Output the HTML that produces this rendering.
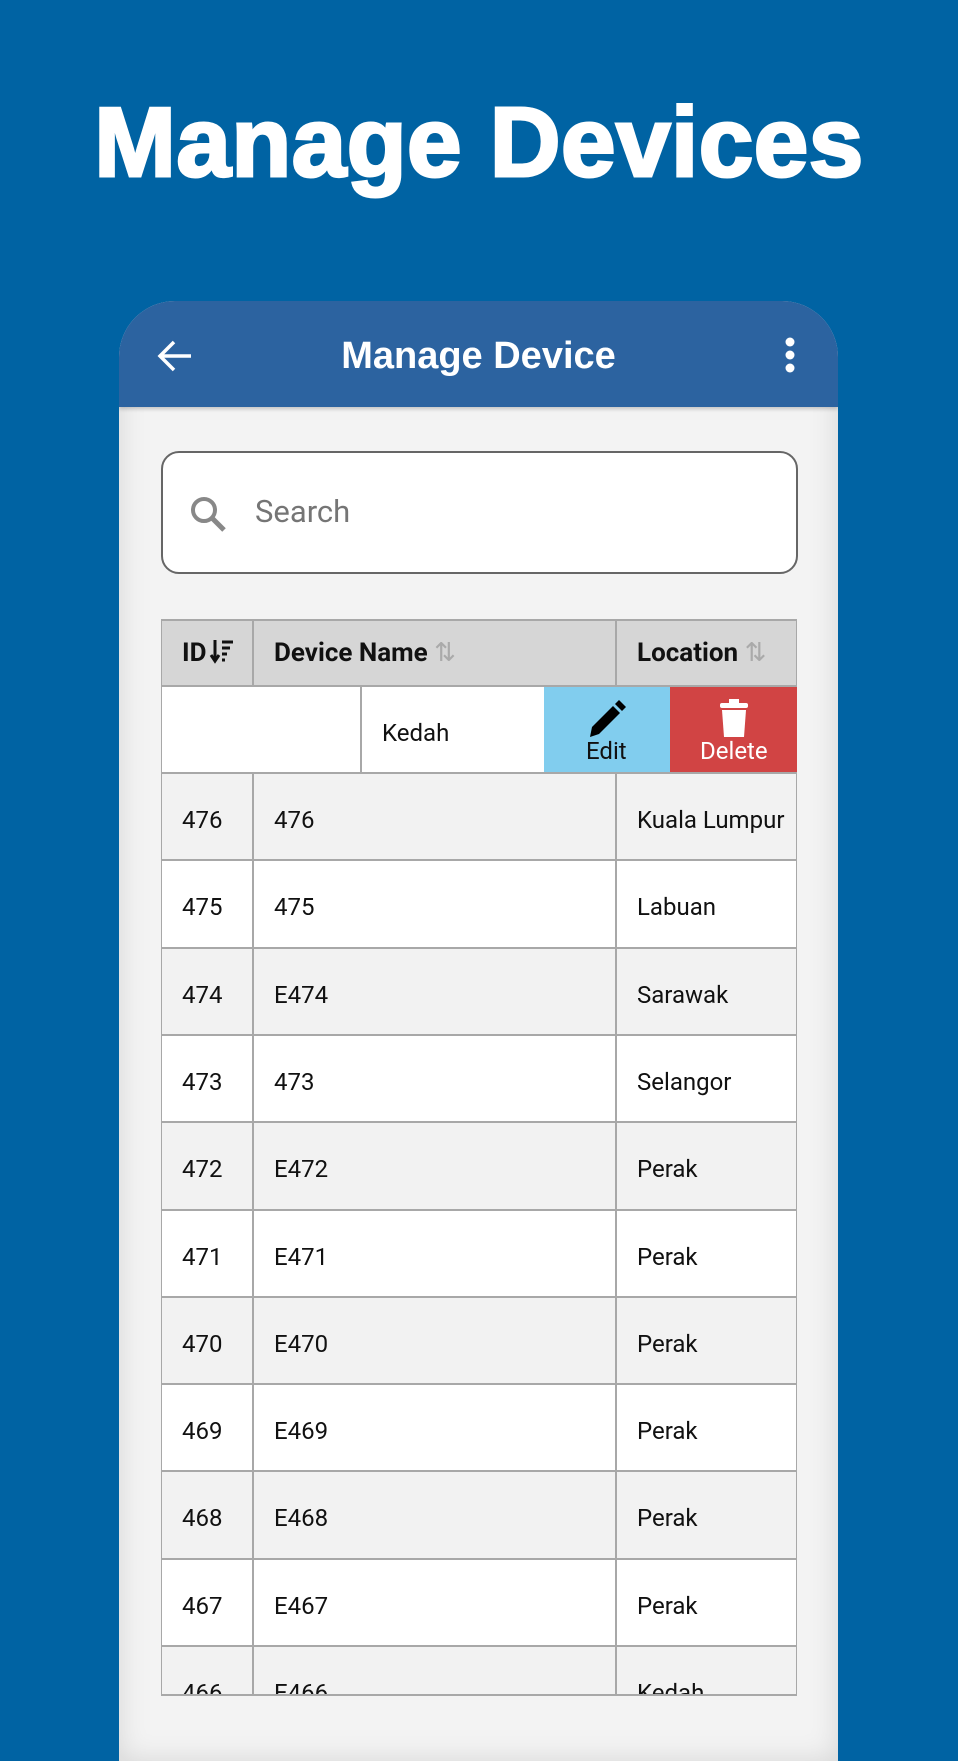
<!DOCTYPE html>
<html><head><meta charset="utf-8"><style>
*{margin:0;padding:0;box-sizing:border-box}
body{width:958px;height:1741px;background:#0063a3;position:relative;overflow:hidden;font-family:"Roboto","Liberation Sans",sans-serif}
.title{position:absolute;left:0;width:958px;top:86px;text-align:center;color:#fff;font:900 98px "Liberation Sans",sans-serif;letter-spacing:0.5px;-webkit-text-stroke:3px #fff}
.phone{position:absolute;left:119px;top:301px;width:719px;height:1460px;border-radius:56px 56px 0 0;background:#f3f3f3;overflow:hidden;box-shadow:inset 0 0 28px rgba(0,0,0,.12)}
.hdr{position:absolute;left:0;top:0;width:719px;height:106px;background:#2c63a0;box-shadow:0 2px 4px rgba(0,0,0,.2)}
.hdr .t{position:absolute;left:0;width:719px;top:34px;text-align:center;color:#fff;font:bold 38px "Liberation Sans",sans-serif}
.search{position:absolute;left:161px;top:451px;width:637px;height:123px;border:2px solid #666;border-radius:18px;background:#fff}
.search span{position:absolute;left:92px;top:40px;font-size:31px;color:#757575}
.tbl{position:absolute;left:161px;top:619px;width:636px;height:1077px;overflow:hidden;border-bottom:2px solid #a8a8a8}
.row{position:absolute;left:0;width:636px;height:89px;border:1px solid #a8a8a8;border-top:2px solid #a8a8a8;font-size:24px;color:#111}
.row div{position:absolute;top:0;height:100%;border-right:2px solid #a8a8a8}
.row span{position:absolute;top:32px}
.h{background:#d6d6d6;height:67px;font-weight:bold;font-size:26px}
.h span{top:17px}
</style></head><body>
<div class="title">Manage Devices</div>
<div class="phone">
<div class="hdr">
<svg style="position:absolute;left:38px;top:38px" width="36" height="34" viewBox="0 0 36 34"><path d="M34 17H4M17 3L3 17l14 14" stroke="#fff" stroke-width="3.5" fill="none"/></svg>
<div class="t">Manage Device</div>
<svg style="position:absolute;left:664px;top:36px" width="14" height="36"><circle cx="7" cy="5" r="4.5" fill="#fff"/><circle cx="7" cy="18" r="4.5" fill="#fff"/><circle cx="7" cy="31" r="4.5" fill="#fff"/></svg>
</div>
</div>
<div class="search">
<svg style="position:absolute;left:26px;top:42px" width="40" height="40" viewBox="0 0 40 40"><circle cx="15" cy="15" r="11" stroke="#888" stroke-width="4" fill="none"/><path d="M23 23l12 12" stroke="#888" stroke-width="5"/></svg>
<span>Search</span>
</div>
<div class="tbl">
<div class="row h" style="top:0;border-top:2px solid #a8a8a8">
<div style="left:0;width:92px"><span style="left:20px">ID<svg width="26" height="26" viewBox="0 0 26 26" style="vertical-align:-3px;margin-left:2px"><path d="M6 2v20M2 17l4 6 4-6" stroke="#111" stroke-width="3" fill="none"/><path d="M13 4h11M13 10h8M13 16h5M13 22h3" stroke="#111" stroke-width="3"/></svg></span></div>
<div style="left:92px;width:363px"><span style="left:20px">Device Name <span style="position:static;color:#aaa;font-weight:normal">⇅</span></span></div>
<div style="left:455px;width:181px;border-right:none"><span style="left:20px">Location <span style="position:static;color:#aaa;font-weight:normal">⇅</span></span></div>
</div>
<div class="row" style="top:66px;height:89px;background:#fff">
<div style="left:0;width:200px"></div>
<div style="left:200px;width:182px;border:none"><span style="left:20px">Kedah</span></div>
<div style="left:382px;width:126px;background:#81cdee;border:none">
<svg style="position:absolute;left:42px;top:12px" width="40" height="40" viewBox="0 0 40 40"><path d="M4 38l2-10L27 7l7 7-21 21z" fill="#000"/><path d="M29 5l4-4 7 7-4 4z" fill="#000"/></svg>
<span style="left:42px;top:50px">Edit</span></div>
<div style="left:508px;width:128px;background:#d14444;border:none;color:#fff">
<svg style="position:absolute;left:48px;top:12px" width="32" height="40" viewBox="0 0 32 40"><rect x="2" y="4" width="28" height="5" rx="2" fill="#fff"/><rect x="11" y="0" width="10" height="5" fill="#fff"/><path d="M4 11h24l-2 27H6z" fill="#fff"/></svg>
<span style="left:30px;top:50px">Delete</span></div>
</div>
</div>
<script>
var d=[["476","476","Kuala Lumpur"],["475","475","Labuan"],["474","E474","Sarawak"],["473","473","Selangor"],["472","E472","Perak"],["471","E471","Perak"],["470","E470","Perak"],["469","E469","Perak"],["468","E468","Perak"],["467","E467","Perak"],["466","E466","Kedah"]];
var t=document.querySelector('.tbl'),h='';
d.forEach(function(r,i){h+='<div class="row" style="top:'+Math.round(153+i*87.3)+'px;background:'+(i%2?'#fff':'#f2f2f2')+'"><div style="left:0;width:92px"><span style="left:20px">'+r[0]+'</span></div><div style="left:92px;width:363px"><span style="left:20px">'+r[1]+'</span></div><div style="left:455px;width:181px;border-right:none"><span style="left:20px">'+r[2]+'</span></div></div>';});
t.insertAdjacentHTML('beforeend',h);
</script>
</body></html>
